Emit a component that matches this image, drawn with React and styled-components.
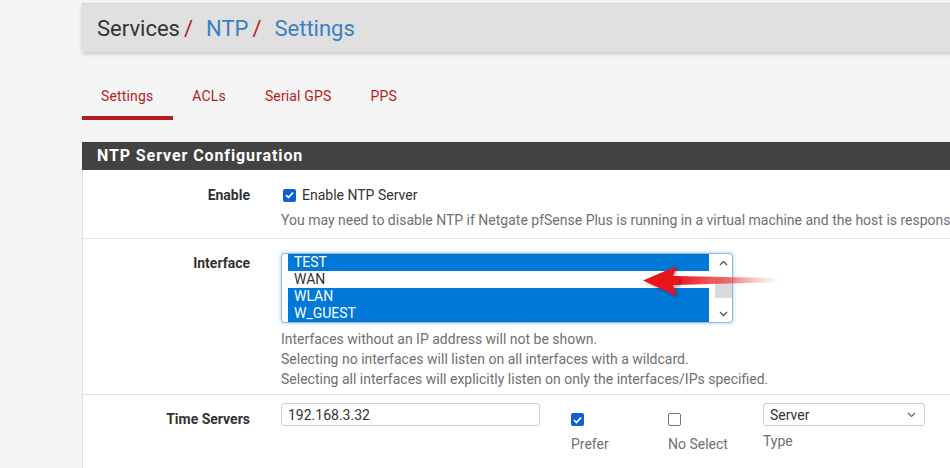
import React from "react";
import styled, { createGlobalStyle } from "styled-components";

const GlobalStyle = createGlobalStyle`
  html, body {
    margin: 0;
    padding: 0;
    background: #f5f5f5;
    overflow: hidden;
    font-family: Roboto, "Liberation Sans", sans-serif;
  }
`;

const interfaces = [
  { name: "TEST", selected: true },
  { name: "WAN", selected: false },
  { name: "WLAN", selected: true },
  { name: "W_GUEST", selected: true },
];

const tabs = ["Settings", "ACLs", "Serial GPS", "PPS"];

const helpLines = [
  "Interfaces without an IP address will not be shown.",
  "Selecting no interfaces will listen on all interfaces with a wildcard.",
  "Selecting all interfaces will explicitly listen on only the interfaces/IPs specified.",
];

function Check({ checked }) {
  return (
    <CheckBox checked={checked}>
      {checked && (
        <svg width="9" height="8" viewBox="0 0 9 8">
          <path d="M1 4.2 L3.5 6.5 L8 1.5" fill="none" stroke="#fff" strokeWidth="1.8" />
        </svg>
      )}
    </CheckBox>
  );
}

export default function App() {
  return (
    <>
      <GlobalStyle />
      <Page>
        <Breadcrumb>
          <Crumb>Services</Crumb>
          <Slash>/</Slash>
          <CrumbLink>NTP</CrumbLink>
          <Slash>/</Slash>
          <CrumbLink>Settings</CrumbLink>
        </Breadcrumb>

        <Tabs>
          {tabs.map((t, i) => (
            <Tab key={t} active={i === 0}>
              {t}
            </Tab>
          ))}
        </Tabs>

        <Panel>
          <PanelHeading>NTP Server Configuration</PanelHeading>
          <PanelBody>
            <Row pb={8}>
              <Label lh={22}>Enable</Label>
              <Control>
                <CheckLine>
                  <Check checked />
                  <span>Enable NTP Server</span>
                </CheckLine>
                <Help mt={4}>
                  You may need to disable NTP if Netgate pfSense Plus is running in a virtual machine and the host is responsible for the clock.
                </Help>
              </Control>
            </Row>

            <Row pb={5}>
              <Label>Interface</Label>
              <Control>
                <ListWrap>
                  <ListBox>
                    <Options>
                      {interfaces.map((o) => (
                        <Option key={o.name} selected={o.selected}>
                          {o.name}
                        </Option>
                      ))}
                    </Options>
                    <ScrollBar>
                      <ScrollArrow>
                        <svg width="9" height="6" viewBox="0 0 9 6">
                          <path d="M1 5 L4.5 1.5 L8 5" fill="none" stroke="#555" strokeWidth="1.3" />
                        </svg>
                      </ScrollArrow>
                      <Track>
                        <Thumb />
                      </Track>
                      <ScrollArrow>
                        <svg width="9" height="6" viewBox="0 0 9 6">
                          <path d="M1 1 L4.5 4.5 L8 1" fill="none" stroke="#555" strokeWidth="1.3" />
                        </svg>
                      </ScrollArrow>
                    </ScrollBar>
                  </ListBox>
                  <Pointer width="150" height="50" viewBox="0 0 150 50">
                    <defs>
                      <linearGradient id="shaft" x1="0" y1="0" x2="1" y2="0">
                        <stop offset="0" stopColor="#e8121a" />
                        <stop offset="0.5" stopColor="#ee3a3a" stopOpacity="0.7" />
                        <stop offset="1" stopColor="#f08080" stopOpacity="0" />
                      </linearGradient>
                      <filter id="shadow" x="-20%" y="-40%" width="140%" height="180%">
                        <feDropShadow dx="1.5" dy="2" stdDeviation="1.5" floodColor="#000" floodOpacity="0.3" />
                      </filter>
                    </defs>
                    <path d="M34 19 L140 21 L140 25 L34 28 Z" fill="url(#shaft)" />
                    <path
                      d="M2 23.5 L36 9 L32 19 L38 19 L38 28 L32 28 L36 39 Z"
                      fill="#e8121a"
                      filter="url(#shadow)"
                    />
                  </Pointer>
                </ListWrap>
                <Help mt={6}>
                  {helpLines.map((l) => (
                    <div key={l}>{l}</div>
                  ))}
                </Help>
              </Control>
            </Row>

            <Row pb={0}>
              <Label>Time Servers</Label>
              <ServerControls>
                <TextInput defaultValue="192.168.3.32" />
                <CheckCol w={97} ml={31}>
                  <Check checked />
                  <SubLabel>Prefer</SubLabel>
                </CheckCol>
                <CheckCol w={95}>
                  <Check />
                  <SubLabel>No Select</SubLabel>
                </CheckCol>
                <TypeCol>
                  <SelectBox>
                    <span>Server</span>
                    <svg width="9" height="6" viewBox="0 0 9 6">
                      <path d="M1 1 L4.5 4.5 L8 1" fill="none" stroke="#666" strokeWidth="1.2" />
                    </svg>
                  </SelectBox>
                  <SubLabel up>Type</SubLabel>
                </TypeCol>
              </ServerControls>
            </Row>
          </PanelBody>
        </Panel>
      </Page>
    </>
  );
}

const Page = styled.div`
  padding-left: 82px;
  width: 1100px;
`;

const Breadcrumb = styled.header`
  margin-top: 3px;
  height: 49px;
  display: flex;
  align-items: center;
  padding-left: 15px;
  background: #e0e0e0;
  border-top: 1px solid #d8d8d8;
  box-shadow: 0 2px 4px rgba(0, 0, 0, 0.18);
  font-size: 22px;
  box-sizing: border-box;
`;

const Crumb = styled.span`
  color: #333;
`;

const CrumbLink = styled.span`
  color: #3a7fc1;
`;

const Slash = styled.span`
  color: #b71c1c;
  margin: 0 13px 0 4px;
`;

const Tabs = styled.nav`
  display: flex;
  margin-top: 20px;
`;

const Tab = styled.div`
  padding: 14px 20px 10px 19px;
  font-size: 14px;
  line-height: 20px;
  letter-spacing: 0.15px;
  color: #b71c1c;
  border-bottom: 4px solid ${(p) => (p.active ? "#b71c1c" : "transparent")};
`;

const Panel = styled.section`
  margin-top: 22px;
`;

const PanelHeading = styled.h2`
  margin: 0;
  height: 28px;
  line-height: 28px;
  padding-left: 15px;
  background: #424242;
  color: #fff;
  font-size: 16px;
  font-weight: 700;
  letter-spacing: 0.9px;
`;

const PanelBody = styled.div`
  background: #fff;
  border-left: 1px solid #e0e0e0;
`;

const Row = styled.div`
  display: flex;
  padding: 14px 0 ${(p) => p.pb}px;
  border-bottom: 1px solid #e0e0e0;
`;

const Label = styled.div`
  width: 182px;
  padding-right: 15px;
  box-sizing: border-box;
  text-align: right;
  font-size: 14px;
  font-weight: 700;
  line-height: ${(p) => p.lh || 20}px;
  color: #333;
  flex-shrink: 0;
`;

const Control = styled.div`
  padding-left: 16px;
  flex: 1;
  font-size: 14px;
  color: #333;
`;

const CheckLine = styled.label`
  display: flex;
  align-items: center;
  gap: 6px;
  height: 22px;
  padding-left: 2px;
`;

const CheckBox = styled.span`
  width: 13px;
  height: 13px;
  box-sizing: border-box;
  border-radius: 2px;
  display: inline-flex;
  align-items: center;
  justify-content: center;
  background: ${(p) => (p.checked ? "#0b62d6" : "#fff")};
  border: ${(p) => (p.checked ? "none" : "1.5px solid #767676")};
  flex-shrink: 0;
`;

const Help = styled.div`
  margin-top: ${(p) => p.mt}px;
  color: #707070;
  font-size: 14px;
  line-height: 20px;
  white-space: nowrap;
`;

const ListWrap = styled.div`
  position: relative;
  width: 452px;
`;

const ListBox = styled.div`
  display: flex;
  height: 70px;
  box-sizing: border-box;
  border: 1px solid #8fb8e0;
  border-radius: 3px;
  box-shadow: 0 0 4px rgba(102, 175, 233, 0.6);
  background: #fff;
  padding-left: 6px;
`;

const Options = styled.div`
  flex: 1;
`;

const Option = styled.div`
  height: 17px;
  line-height: 17px;
  padding-left: 6px;
  font-size: 14px;
  background: ${(p) => (p.selected ? "#0078d7" : "#fff")};
  color: ${(p) => (p.selected ? "#fff" : "#333")};
`;

const ScrollBar = styled.div`
  width: 23px;
  display: flex;
  flex-direction: column;
  align-items: flex-end;
`;

const ScrollArrow = styled.div`
  width: 17px;
  height: 17px;
  display: flex;
  align-items: center;
  justify-content: center;
`;

const Track = styled.div`
  flex: 1;
  width: 17px;
  display: flex;
  align-items: flex-end;
`;

const Thumb = styled.div`
  width: 17px;
  height: 20px;
  margin-bottom: 7px;
  background: #dadada;
`;

const Pointer = styled.svg`
  position: absolute;
  left: 360px;
  top: 4px;
  pointer-events: none;
`;

const ServerControls = styled.div`
  display: flex;
  padding-left: 16px;
  margin-top: -6px;
  height: 69px;
`;

const TextInput = styled.input`
  width: 259px;
  height: 23px;
  box-sizing: border-box;
  border: 1px solid #cfcfcf;
  border-radius: 3px;
  padding: 0 6px;
  font-family: Roboto, "Liberation Sans", sans-serif;
  font-size: 14px;
  color: #333;
  outline: none;
`;

const CheckCol = styled.div`
  width: ${(p) => p.w}px;
  margin-left: ${(p) => p.ml || 0}px;
  padding-top: 10px;
  display: flex;
  flex-direction: column;
  align-items: flex-start;
`;

const SubLabel = styled.div`
  margin-top: ${(p) => (p.up ? 5 : 8)}px;
  font-size: 14px;
  line-height: 20px;
  color: #707070;
`;

const TypeCol = styled.div`
  width: 162px;
  display: flex;
  flex-direction: column;
`;

const SelectBox = styled.div`
  height: 23px;
  box-sizing: border-box;
  border: 1px solid #cfcfcf;
  border-radius: 3px;
  padding: 0 8px 0 6px;
  display: flex;
  align-items: center;
  justify-content: space-between;
  font-size: 14px;
  color: #333;
`;
